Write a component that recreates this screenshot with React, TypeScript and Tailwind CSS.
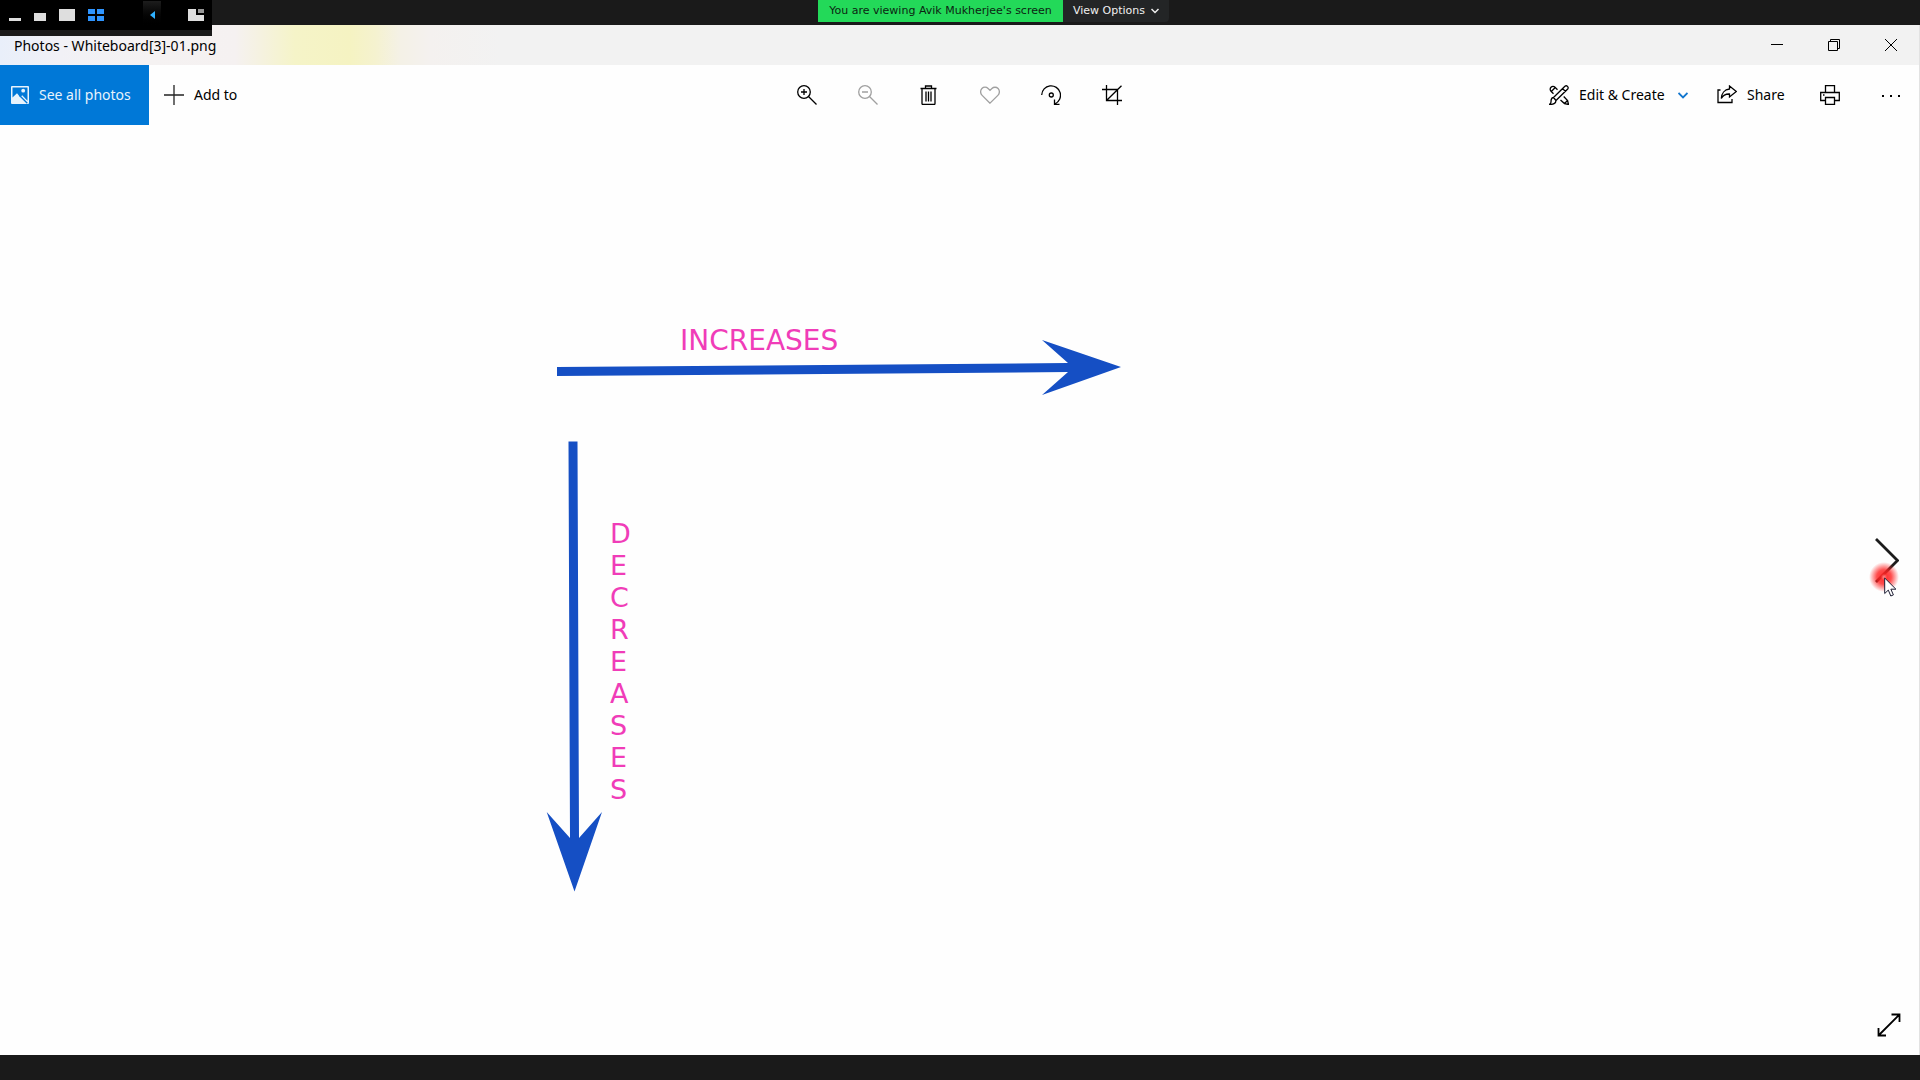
import type { ReactNode } from "react";

function Icon({ children, className = "" }: { children: ReactNode; className?: string }) {
  return (
    <svg
      viewBox="0 0 20 20"
      className={`h-5 w-5 shrink-0 ${className}`}
      fill="none"
      stroke="currentColor"
      strokeWidth="1.3"
      aria-hidden="true"
    >
      {children}
    </svg>
  );
}

function ShareBar() {
  return (
    <header className="relative z-10 flex h-[25px] shrink-0 justify-center bg-[#1a1a1a] font-['DejaVu_Sans',sans-serif] text-[11px]">
      <div className="absolute left-0 top-0 h-9 w-[212px] bg-[#1a1a1a]">
        <div className="flex h-[30px] items-center gap-[13px] bg-black pl-[9px] text-[#dedede]">
          <button aria-label="Hide video panel">
            <svg viewBox="0 0 12 12" className="block h-3 w-3" fill="currentColor"><path d="M0 9h12v3H0z" /></svg>
          </button>
          <button aria-label="Small video panel">
            <svg viewBox="0 0 12 12" className="block h-3 w-3" fill="currentColor"><path d="M0 4h12v8H0z" /></svg>
          </button>
          <button aria-label="Large video panel">
            <svg viewBox="0 0 16 12" className="block h-3 w-4" fill="currentColor"><path d="M0 0h16v12H0z" /></svg>
          </button>
          <button aria-label="Grid video panel" className="text-[#2f95ff]">
            <svg viewBox="0 0 16 12" className="block h-3 w-4" fill="currentColor"><path d="M0 0h7v5H0zM9 0h7v5H9zM0 7h7v5H0zM9 7h7v5H9z" /></svg>
          </button>
          <button
            aria-label="Previous participants"
            className="ml-[26px] flex h-7 w-[18px] items-center justify-center bg-linear-to-b from-[#1d1d1d] to-black text-[#2fb1ff]"
          >
            <svg viewBox="0 0 5 8" className="block h-2 w-[5px]" fill="currentColor"><path d="M5 0v8L0 4z" /></svg>
          </button>
          <button aria-label="Switch layout" className="ml-3.5">
            <svg viewBox="0 0 16 12" className="block h-3 w-4" fill="currentColor">
              <path d="M0 0h8v6h8v6H0z" />
              <path d="M10 0h6v4h-6z" fill="#969696" />
            </svg>
          </button>
        </div>
      </div>
      <div className="ml-[67px] flex h-[22px]">
        <p className="flex w-[245px] items-center justify-center whitespace-nowrap bg-[#23d959] text-[#0c1f12]">
          You are viewing Avik Mukherjee's screen
        </p>
        <button className="flex w-[106px] items-center gap-1.5 whitespace-nowrap rounded-br bg-[#232526] pl-2.5 text-[#f0f0f0]">
          View Options
          <svg viewBox="0 0 8 6" className="h-1.5 w-2" fill="none" stroke="currentColor" strokeWidth="1.5" aria-hidden="true">
            <path d="M.5 1 4 4.5 7.5 1" />
          </svg>
        </button>
      </div>
    </header>
  );
}

function TitleBar() {
  return (
    <div className="flex h-10 shrink-0 items-center justify-between bg-[#f2f2f2] bg-[linear-gradient(90deg,#e9effa_0px,#f1f1f6_60px,#f5f2f2_150px,#f5f1f1_235px,#f5f2df_262px,#f5f4c8_295px,#f5f3c2_350px,#f5f2cf_375px,#f4f1e6_400px,#f4f1ef_430px,#f2f2f2_500px)]">
      <h1 className="pl-3.5 text-[14px]">Photos - Whiteboard[3]-01.png</h1>
      <div className="flex h-full">
        <button aria-label="Minimize" className="flex w-[57px] items-center justify-center">
          <svg viewBox="0 0 12 12" className="h-3 w-3" stroke="black" fill="none"><path d="M0 5.5h12" /></svg>
        </button>
        <button aria-label="Restore" className="flex w-[57px] items-center justify-center">
          <svg viewBox="0 0 12 12" className="h-3 w-3" stroke="black" fill="none"><path d="M.5 2.5h9v9h-9zM2.5 2.5v-2h9v9h-2" /></svg>
        </button>
        <button aria-label="Close" className="flex w-[57px] items-center justify-center">
          <svg viewBox="0 0 12 12" className="h-3 w-3" stroke="black" fill="none"><path d="m0 0 12 12M12 0 0 12" /></svg>
        </button>
      </div>
    </div>
  );
}

const tools = [
  {
    label: "Zoom in",
    tone: "text-black",
    drawing: <><circle cx="7" cy="7" r="6.3" /><path d="m11.5 11.5 8 8M7 4v6M4 7h6" /></>,
  },
  {
    label: "Zoom out",
    tone: "text-[#a0a0a0]",
    drawing: <><circle cx="7" cy="7" r="6.3" /><path d="m11.5 11.5 8 8M4 7h6" /></>,
  },
  {
    label: "Delete",
    tone: "text-black",
    drawing: <path d="M1.500 3.500h16M6.500 3.500V1h6v2.500M3 3.500v15q0 1 1 1h11q1 0 1-1v-15M7 6.500v10M9.500 6.500v10M12 6.500v10" />,
  },
  {
    label: "Add to favorites",
    tone: "text-[#a0a0a0]",
    drawing: <path d="M10 18.200 1.900 10.100C.2 8.400.2 5.200 1.900 3.500c1.700-1.700 4.500-1.700 6.200 0L10 5.400l1.900-1.900c1.700-1.700 4.500-1.700 6.200 0 1.700 1.700 1.700 4.900 0 6.600z" />,
  },
  {
    label: "Rotate",
    tone: "text-black",
    drawing: <><path d="M.7 10A9.400 9.400 0 1 1 14 18.800M13.500 14.500v4.800h5" /><circle cx="10.300" cy="10" r="2" /></>,
  },
  {
    label: "Crop",
    tone: "text-black",
    drawing: <path d="M4.500 0v15.500H20M0 4.500h15.500V20M4.500 15.500 19.500.7" />,
  },
];

function Toolbar() {
  return (
    <nav className="grid h-[60px] shrink-0 grid-cols-[1fr_auto_1fr] items-stretch text-[14px]">
      <div className="flex">
        <button className="flex w-[149px] items-center gap-2.5 whitespace-nowrap bg-[#0078d7] pl-[11px] text-[#e8f3fc]">
          <svg viewBox="0 0 18 18" className="h-[18px] w-[18px] shrink-0" aria-hidden="true">
            <path fill="currentColor" d="M1 0h16q1 0 1 1v16q0 1-1 1H1q-1 0-1-1V1q0-1 1-1z" />
            <path fill="#0078d7" d="M1.500 1.500h15v13.200L11.200 9.200l-1.900 2L6 7.300l-4.500 4.200z" />
            <circle cx="12.200" cy="4.700" r="1.900" fill="currentColor" />
            <path d="m8.300 9.300 8 8" stroke="#0078d7" strokeWidth="1.300" />
          </svg>
          <span className="pb-0.5">See all photos</span>
        </button>
        <button className="flex items-center gap-2.5 whitespace-nowrap pl-[15px]">
          <Icon className="text-[#222]"><path d="M10 0v20M0 10h20" /></Icon>
          <span className="pb-0.5">Add to</span>
        </button>
      </div>
      <div className="flex">
        {tools.map((tool) => (
          <button key={tool.label} aria-label={tool.label} className={`flex w-[61px] items-center justify-center ${tool.tone}`}>
            <Icon>{tool.drawing}</Icon>
          </button>
        ))}
      </div>
      <div className="flex justify-end">
        <button className="flex w-[150px] items-center whitespace-nowrap pl-2.5">
          <Icon className="mr-2.5">
            <path d="M4.500 8.800 2 6.300a2.800 2.800 0 0 1 4-4l2.500 2.500M11.500 15l4 3.600 4 .9-.9-4-3.900-4M2.300 6.500l4.200-4.200M15.500 18.500l3-3" />
            <path d="M7 15.500 18.700 4a2 2 0 0 0-2.800-2.800L4.500 12.500M4.500 12.500c-2.500 0-2.500 3-2.500 4.500 0 1-1 2-1.500 2.300 3.500.4 6.500-.8 6.500-3.800zM4.500 12.500l2.500 3M13.500 3.500l3 3" />
          </Icon>
          <span className="flex-1 pb-0.5 text-left">Edit &amp; Create</span>
          <svg viewBox="0 0 10 7" className="mr-px h-[7px] w-2.5" fill="none" stroke="#1377cf" strokeWidth="1.800" aria-hidden="true">
            <path d="m.5 1 4.500 4.500L9.500 1" />
          </svg>
        </button>
        <button className="ml-[18px] flex w-[92px] items-center gap-2.5 whitespace-nowrap pl-2.5">
          <Icon>
            <path d="M3.500 5H1v12.500h14V14M12.500 1l6.800 5.500-6.800 5.500V9C8.500 8.800 6 10.300 4.300 13.500c.2-5 3.200-9 8.200-9.500z" />
          </Icon>
          <span className="pb-0.5">Share</span>
        </button>
        <button aria-label="Print" className="flex w-[61px] items-center justify-center">
          <Icon>
            <path d="M5.500 7.500v-7h9v7M5.500 15.500H.7v-8h18.600v8h-4.800M5.500 12.500h9v7h-9zM3 10h1.500" />
          </Icon>
        </button>
        <button aria-label="See more" className="flex w-[59px] items-center justify-center">
          <Icon>
            <path fill="currentColor" stroke="none" d="M2 10h2v2H2zM10 10h2v2h-2zM18 10h2v2h-2z" />
          </Icon>
        </button>
      </div>
    </nav>
  );
}

function Diagram() {
  return (
    <figure className="ml-[546px] pt-[200px] font-['DejaVu_Sans',sans-serif] text-[#f03cb8]">
      <p className="pl-[134px] text-[28px] leading-8">INCREASES</p>
      <svg viewBox="0 0 576 57" className="-mt-[18px] block h-[57px] w-[576px]" fill="#154fc4" aria-hidden="true">
        <path d="M11 28 522 24 496 1l79 27-79 28 26-23-511 4z" />
      </svg>
      <div className="mt-[45px] flex">
        <svg viewBox="0 0 57 451" className="block h-[451px] w-[57px]" fill="#154fc4" aria-hidden="true">
          <path d="M22.500.5h9L33 397l23-26-27.500 79.500L.7 371 24 397z" />
        </svg>
        <p className="w-8 pl-[7px] pt-[77px] text-[27px] leading-8">
          {"DECREASES".split("").map((letter, i) => (
            <span key={i} className="block">{letter}</span>
          ))}
        </p>
      </div>
    </figure>
  );
}

export default function App() {
  return (
    <div className="flex min-h-screen flex-col bg-[#1a1a1a] font-['Noto_Sans','Open_Sans',sans-serif] text-black">
      <ShareBar />
      <main className="flex flex-1 flex-col border-r border-[#e2e2e2] bg-[#fefefe]">
        <TitleBar />
        <Toolbar />
        <section className="relative flex-1">
          <Diagram />
          <button aria-label="Next photo" className="absolute right-5 top-[412px]">
            <svg viewBox="0 0 24 46" className="block h-[46px] w-6" fill="none" stroke="#1c1c1c" strokeWidth="2.800">
              <path d="m1 2 21.500 21.500L1 45" />
            </svg>
          </button>
          <div className="pointer-events-none absolute right-[15px] top-[436px] h-9 w-9">
            <div className="h-8 w-8 rounded-full bg-[radial-gradient(circle,#ff8a8a_0%,#ff2222e6_14%,#ff2222cc_32%,#ff5a5a00_66%)]" />
            <svg viewBox="0 0 13 20" className="absolute left-4 top-4 h-5 w-[13px]" aria-hidden="true">
              <path d="M.7 1v15.500l3.600-3.400 2.500 5.900 2.600-1.100-2.500-5.700h5z" fill="white" stroke="#1d1d33" />
            </svg>
          </div>
          <button aria-label="Full screen" className="absolute bottom-[18px] right-[18px]">
            <svg viewBox="0 0 24 24" className="block h-6 w-6" fill="none" stroke="black" strokeWidth="1.800">
              <path d="M2 22 22 2M14.500 1.500h8V9M1.500 15v7.500H9" />
            </svg>
          </button>
        </section>
      </main>
      <footer className="h-[25px] shrink-0 bg-[#1a1a1a]" />
    </div>
  );
}
